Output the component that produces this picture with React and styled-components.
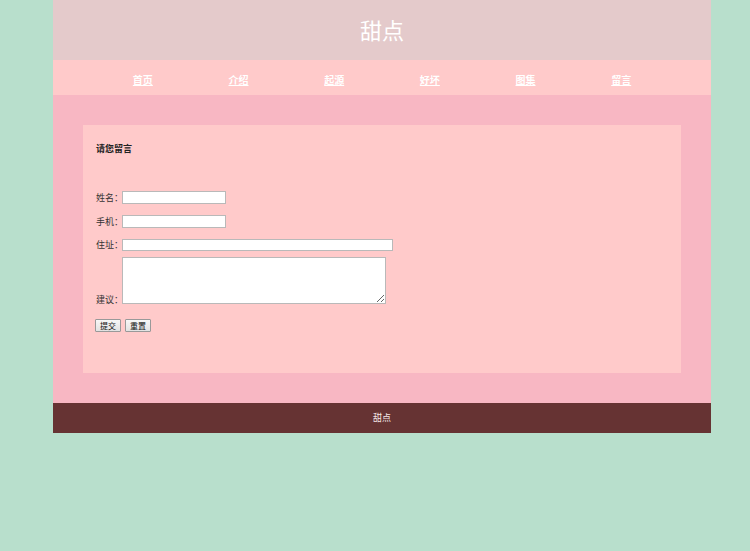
import React from 'react';
import styled, {createGlobalStyle} from 'styled-components'

const GlobalStyle = createGlobalStyle`
    body{
        margin: 0;
        background-color: #b8dfcc;
        font-family: "Noto Sans CJK SC", "Liberation Sans", sans-serif;
    }
`

const links = ['首页', '介绍', '起源', '好坏', '图集', '留言']

function App(){
    return(
        <>
         <GlobalStyle />
         <Page>
            <Header>甜点</Header>
            <Nav>
                <ul>
                    {links.map((l) => (
                        <li key={l}><a href="#">{l}</a></li>
                    ))}
                </ul>
            </Nav>
            <Main>
                <Panel>
                    <Title>请您留言</Title>
                    <form onSubmit={(e) => e.preventDefault()}>
                        <Row>
                            <Label>姓名：</Label>
                            <Input type="text" />
                        </Row>
                        <Row>
                            <Label>手机：</Label>
                            <Input type="text" />
                        </Row>
                        <Row>
                            <Label>住址：</Label>
                            <Input type="text" wide />
                        </Row>
                        <Row bottom>
                            <Label>建议：</Label>
                            <TextArea />
                        </Row>
                        <Buttons>
                            <Btn type="submit">提交</Btn>
                            <Btn type="reset">重置</Btn>
                        </Buttons>
                    </form>
                </Panel>
            </Main>
            <Footer>甜点</Footer>
         </Page>
        </>
    );
}

export default App

const Page = styled.div`
    width: 658px;
    margin-left: 53px;
`

const Header = styled.header`
    height: 60px;
    background-color: #e4cacb;
    color: white;
    font-size: 22px;
    line-height: 58px;
    text-align: center;
`

const Nav = styled.nav`
    height: 35px;
    background-color: #ffcaca;
    ul{
        list-style: none;
        margin: 0 auto;
        padding: 0;
        width: 574px;
        display: flex;
        height: 100%;
        align-items: center;
    }
    li{
        flex: 1;
        text-align: center;
        padding-bottom: 2px;
    }
    a{
        color: white;
        font-weight: bold;
        font-size: 10px;
        text-decoration: underline;
    }
`

const Main = styled.main`
    background-color: #f8b7c3;
    padding: 30px;
`

const Panel = styled.div`
    background-color: #ffcaca;
    padding: 18px 13px 41px;
    color: #333;
    font-size: 9px;
`

const Title = styled.h4`
    margin: 0 0 36px;
    font-size: 9px;
    line-height: 12px;
    font-weight: bold;
    color: #222;
`

const Label = styled.span`
    width: 26px;
    line-height: 12px;
    white-space: nowrap;
`

const Row = styled.div`
    display: flex;
    align-items: ${(p) => p.bottom ? 'flex-end' : 'center'};
    margin-bottom: ${(p) => p.bottom ? '15px' : '11px'};
    &:nth-child(3){
        margin-bottom: 6px;
    }
    ${Label}{
        margin-bottom: ${(p) => p.bottom ? '-2px' : '0'};
    }
`

const Input = styled.input`
    box-sizing: border-box;
    width: ${(p) => p.wide ? '271px' : '104px'};
    height: ${(p) => p.wide ? '12px' : '13px'};
    margin: 0;
    padding: 0 2px;
    border: 1px solid #b9b9b9;
    background: white;
`

const TextArea = styled.textarea`
    box-sizing: border-box;
    width: 264px;
    height: 47px;
    margin: 0;
    border: 1px solid #b9b9b9;
    background: white;
`

const Buttons = styled.div`
    display: flex;
    gap: 4px;
    margin-left: -1px;
`

const Btn = styled.button`
    box-sizing: border-box;
    width: 26px;
    height: 13px;
    padding: 0;
    font-size: 8px;
    line-height: 11px;
    font-family: "Noto Sans CJK SC", sans-serif;
    color: #111;
    border: 1px solid #999;
    border-radius: 1px;
    background: linear-gradient(#f7f7f7, #e2e2e2);
`

const Footer = styled.footer`
    height: 30px;
    background-color: #663333;
    color: #f3e6e6;
    font-size: 9px;
    line-height: 30px;
    text-align: center;
`
